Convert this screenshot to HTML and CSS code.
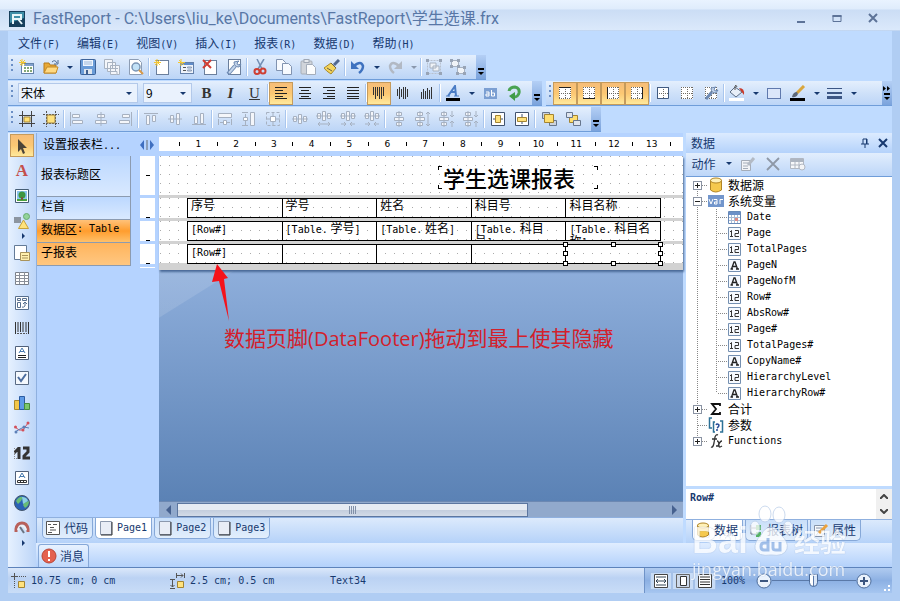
FILE: index.html
```
<!DOCTYPE html>
<html lang="zh-CN">
<head>
  <meta charset="UTF-8">
  <title>FastReport - 学生选课.frx</title>
  <link rel="stylesheet" href="styles.css">
</head>
<body>

  <!-- icon sprite -->
  <svg class="sprite" xmlns="http://www.w3.org/2000/svg">
    <symbol id="logo" viewBox="0 0 16 16"><rect width="16" height="16" fill="#163f5c"/><path d="M1 1h14v6L1 12z" fill="#3f8fa8"/><path d="M4 13V4h8v4H5M9 8l4 5" fill="none" stroke="#e8f6fa" stroke-width="2"/></symbol>
    <symbol id="new" viewBox="0 0 16 16"><rect x="2.500" y="4.500" width="12" height="10" fill="#fff" stroke="#6482ab"/><path d="M5 5h9v2H5z" fill="#7fa0cc"/><path d="M5 9h2M8 9h2M11 9h2M5 12h2M8 12h2M11 12h2" stroke="#85a977" stroke-width="2"/><path d="M3 0v7M0 3.500h7M1 1l5 5M6 1L1 6" stroke="#f3c632"/></symbol>
    <symbol id="open" viewBox="0 0 16 16"><path d="M1 14V4h5l1 2h6v8z" fill="#e8a936" stroke="#b67a1b"/><path d="M1 14l3-6h11l-2 6z" fill="#ffd982" stroke="#c48b29"/><path d="M9 3q3-3 5 1M15 1v4h-4" fill="none" stroke="#4d6a93"/></symbol>
    <symbol id="save" viewBox="0 0 16 16"><rect x=".5" y=".5" width="15" height="15" rx="1" fill="#6a9cd8" stroke="#3c6399"/><path d="M3 1h10v6H3z" fill="#eff6ff"/><path d="M4 3h8M4 5h8" stroke="#9cb8d9"/><path d="M4 10h8v5H4z" fill="#dde5ee"/><path d="M6 11h2v4H6z" fill="#3f5f8e"/></symbol>
    <symbol id="saveall" viewBox="0 0 16 16"><g fill="#f4f6fa" stroke="#a9b3c1"><path d="M.5.5h8v9h-8zM3.500 3.500h8v9h-8zM6.500 6.500h9v9h-9z"/><path d="M8 9.500h6M9 12.500h4v3"/></g></symbol>
    <symbol id="preview" viewBox="0 0 16 16"><path d="M1.500.5h9l3 3v12h-12z" fill="#fff" stroke="#8d9db4"/><circle cx="8" cy="8" r="4" fill="#c3e2f7" stroke="#7a95b5" stroke-width="1.500"/><path d="M11 11l4 4" stroke="#d99a48" stroke-width="2"/></symbol>
    <symbol id="page" viewBox="0 0 16 16"><rect x="2.500" y="1.500" width="12" height="14" fill="#fff" stroke="#6b7f9c"/><path d="M3 0v7M0 3.500h7M1 1l5 5M6 1L1 6" stroke="#f3c632"/></symbol>
    <symbol id="dialog" viewBox="0 0 16 16"><rect x="2.500" y="3.500" width="13" height="11" fill="#eef3fb" stroke="#6480aa"/><path d="M3 4h12v2H3z" fill="#5f8bc9"/><path d="M5 8.500h3M5 11.500h3" stroke="#555"/><path d="M9.500 8v1h4V8zM9.500 11v1h4v-1z" fill="none" stroke="#8a9bb5"/><path d="M3 0v7M0 3.500h7M1 1l5 5" stroke="#f3c632"/></symbol>
    <symbol id="delpage" viewBox="0 0 16 16"><rect x="2.500" y="1.500" width="12" height="14" fill="#fff" stroke="#6b7f9c"/><path d="M1 1l8 8M9 1L1 9" stroke="#d03c33" stroke-width="2"/></symbol>
    <symbol id="setup" viewBox="0 0 16 16"><rect x="2.500" y=".5" width="12" height="15" fill="#fff" stroke="#6b7f9c"/><path d="M2 15l7-8" stroke="#6d89b2" stroke-width="4"/><path d="M3 14l6-7" stroke="#c3d4ea" stroke-width="2"/><path d="M8 3q0 5 5 5l2-3-3 1-1-2 2-2z" fill="#c2d3e9" stroke="#6d89b2"/></symbol>
    <symbol id="cut" viewBox="0 0 16 16"><path d="M5 0l5 10M12 0L6 10" stroke="#748fb5" stroke-width="1.500"/><circle cx="5" cy="12.500" r="2.500" fill="none" stroke="#cf3f33" stroke-width="2"/><circle cx="11" cy="12" r="2.500" fill="none" stroke="#cf3f33" stroke-width="2"/></symbol>
    <symbol id="copy" viewBox="0 0 16 16"><g fill="#f7fafe" stroke="#8193b0"><path d="M.5.5h6l3 3v8h-9z"/><path d="M6.500 4.500h6l3 3v8h-9z"/></g></symbol>
    <symbol id="paste" viewBox="0 0 16 16"><rect x="1" y="2" width="11" height="13" rx="1" fill="#d0d4da" stroke="#a7aeb8"/><rect x="4" y=".5" width="5" height="3" fill="#e6e9ed" stroke="#a0a8b4"/><path d="M6.500 5.500h6l3 3v7h-9z" fill="#fbfcfd" stroke="#a4adba"/></symbol>
    <symbol id="brush" viewBox="0 0 16 16"><path d="M10 6l5-5" stroke="#51688f" stroke-width="3"/><path d="M7 4l5 5-5 6Q2 12 0 9z" fill="#f4d45c" stroke="#a98a2c"/><path d="M3 9l5 3M7 4l5 5" stroke="#6b6246"/></symbol>
    <symbol id="undo" viewBox="0 0 16 16"><path d="M4 7q7-6 9 0 0 4-4 7" fill="none" stroke="#3f72bf" stroke-width="2.500"/><path d="M1 2v8h8z" fill="#3f72bf"/></symbol>
    <symbol id="redo" viewBox="0 0 16 16"><path d="M12 7q-7-6-9 0 0 4 4 7" fill="none" stroke="#b2b9c4" stroke-width="2.500"/><path d="M15 2v8H7z" fill="#b2b9c4"/></symbol>
    <symbol id="group" viewBox="0 0 16 16"><path d="M1.500 1.500h13v13h-13z" fill="none" stroke="#b8c1ce" stroke-dasharray="2 1"/><path d="M4 4h6v5H4zM7 7h6v5H7z" fill="#f0f3f7" stroke="#a8b2c0"/><path d="M0 0h3v3H0zM13 0h3v3h-3zM0 13h3v3H0zM13 13h3v3h-3z" fill="#98a4b6"/></symbol>
    <symbol id="ungroup" viewBox="0 0 16 16"><path d="M1.500 1.500h7v6h-7zM7.500 8.500h7v6h-7z" fill="#f0f3f7" stroke="#a8b2c0"/><path d="M0 0h3v3H0zM7 0h3v3H7zM0 6h3v3H0zM7 6h3v3H7zM13 7h3v3h-3zM6 13h3v3H6zM13 13h3v3h-3z" fill="#98a4b6"/></symbol>
    <symbol id="al" viewBox="0 0 16 16"><path d="M2 2.500h12M2 5.500h8M2 8.500h12M2 11.500h8M2 13.500h12" stroke="#222"/></symbol>
    <symbol id="ac" viewBox="0 0 16 16"><path d="M2 2.500h12M4 5.500h8M2 8.500h12M4 11.500h8M2 13.500h12" stroke="#222"/></symbol>
    <symbol id="ar" viewBox="0 0 16 16"><path d="M2 2.500h12M6 5.500h8M2 8.500h12M6 11.500h8M2 13.500h12" stroke="#222"/></symbol>
    <symbol id="aj" viewBox="0 0 16 16"><path d="M2 2.500h12M2 5.500h12M2 8.500h12M2 11.500h12M2 13.500h12" stroke="#222"/></symbol>
    <symbol id="vt" viewBox="0 0 16 16"><path d="M2.500 2v8M4.500 2v12M6.500 2v9M8.500 2v12M10.500 2v12M12.500 2v9" stroke="#333"/></symbol>
    <symbol id="vc" viewBox="0 0 16 16"><path d="M2.500 4v7M4.500 2v12M6.500 4v8M8.500 2v12M10.500 2v12M12.500 4v8" stroke="#333"/></symbol>
    <symbol id="vb" viewBox="0 0 16 16"><path d="M2.500 7v7M4.500 4v10M6.500 6v8M8.500 3v11M10.500 5v9M12.500 2v12" stroke="#333"/></symbol>
    <symbol id="fcolor" viewBox="0 0 16 16"><path d="M1 13h14v3H1z" fill="#000"/><path d="M3 11l7-10 1 10M6 7h5" fill="none" stroke="#4a7cc4" stroke-width="2"/><path d="M1 11h4M9 11h5" stroke="#4a7cc4"/></symbol>
    <symbol id="ab" viewBox="0 0 16 16"><path d="M2 3h13v11H2z" fill="#7c9fd2"/><path d="M4 7h3v4H4V9h3M9.500 5v6h3V8h-3" fill="none" stroke="#fff"/></symbol>
    <symbol id="rot" viewBox="0 0 16 16"><path d="M3 6q1-4 6-4 5 1 4 6-1 4-5 4" fill="none" stroke="#4aa352" stroke-width="3"/><path d="M3 11l6-4v9z" fill="#3f9b47"/></symbol>
    <symbol id="grid" viewBox="0 0 16 16"><path d="M2 2h12v12H2z" fill="#fff"/><path d="M2.500 2v12M8.500 2v12M13.500 2v12M2 2.500h12M2 8.500h12M2 13.500h12" stroke="#6e6a63" stroke-dasharray="1 1"/></symbol>
    <symbol id="g-top" viewBox="0 0 16 16"><use href="#grid"/><path d="M2 2.500h12" stroke="#222"/></symbol>
    <symbol id="g-bot" viewBox="0 0 16 16"><use href="#grid"/><path d="M2 13.500h12" stroke="#222"/></symbol>
    <symbol id="g-left" viewBox="0 0 16 16"><use href="#grid"/><path d="M2.500 2v12" stroke="#222"/></symbol>
    <symbol id="g-right" viewBox="0 0 16 16"><use href="#grid"/><path d="M13.500 2v12" stroke="#222"/></symbol>
    <symbol id="g-all" viewBox="0 0 16 16"><use href="#grid"/><path d="M2.500 2.500h11v11h-11z" fill="none" stroke="#415b82"/></symbol>
    <symbol id="g-set" viewBox="0 0 16 16"><use href="#grid"/><path d="M3 14l6-7" stroke="#6d89b2" stroke-width="3"/><path d="M8 3q0 5 5 5l2-3-3 1-1-2 2-2z" fill="#c2d3e9" stroke="#6d89b2"/></symbol>
    <symbol id="fill" viewBox="0 0 16 16"><path d="M0 13h15v3H0z" fill="#fff"/><path d="M6 2l7 5-6 5-6-5z" fill="#e7eef8" stroke="#5c6c84"/><path d="M6 5V1q1-2 2 1" fill="none" stroke="#555"/><path d="M10 3q6 0 5 7l-3-4z" fill="#c93a2b"/></symbol>
    <symbol id="box" viewBox="0 0 16 16"><rect x="1.500" y="3.500" width="13" height="10" fill="#dbe6fa" stroke="#6079ad"/></symbol>
    <symbol id="lcolor" viewBox="0 0 16 16"><path d="M0 13h15v3H0z"/><path d="M7 8l7-7" stroke="#d9a63d" stroke-width="3"/><path d="M2 12q1-5 5-5l1 2q-2 4-6 3z" fill="#5d6878"/></symbol>
    <symbol id="lines" viewBox="0 0 16 16"><path d="M0 3.500h15" stroke="#3c5684"/><path d="M0 8h15" stroke="#3c5684" stroke-width="2"/><path d="M0 12.500h15" stroke="#3c5684" stroke-width="3"/></symbol>
    <symbol id="snap" viewBox="0 0 16 16"><path d="M0 4.500h16M0 12.500h16M3.500 0v16M12.500 0v16" stroke="#444"/><path d="M5 6h6v5H5z" fill="#ffdf72" stroke="#a88732"/></symbol>
    <symbol id="snap2" viewBox="0 0 16 16"><path d="M0 3.500h16M0 12.500h16M3.500 0v16M12.500 0v16" stroke="#555" stroke-dasharray="2 1"/><path d="M4 4h8v8H4z" fill="#ffe27d" stroke="#9d8345"/></symbol>
    <symbol id="a1" viewBox="0 0 16 16"><path d="M1.500 1v14M3.500 3.500h7v3h-7zM3.500 9.500h10v3h-10z" fill="#f4f6fa" stroke="#a6b1c1"/></symbol>
    <symbol id="a2" viewBox="0 0 16 16"><path d="M8 1v14M4.500 3.500h7v3h-7zM2.500 9.500h11v3h-11z" fill="#f4f6fa" stroke="#a6b1c1"/></symbol>
    <symbol id="a3" viewBox="0 0 16 16"><path d="M14.500 1v14M5.500 3.500h7v3h-7zM2.500 9.500h10v3h-10z" fill="#f4f6fa" stroke="#a6b1c1"/></symbol>
    <symbol id="a4" viewBox="0 0 16 16"><path d="M1 2.500h14M3.500 4.500h3v9h-3zM9.500 4.500h3v6h-3z" fill="#f4f6fa" stroke="#a6b1c1"/></symbol>
    <symbol id="a5" viewBox="0 0 16 16"><path d="M1 8h14M3.500 4.500h3v7h-3zM9.500 2.500h3v11h-3z" fill="#f4f6fa" stroke="#a6b1c1"/></symbol>
    <symbol id="a6" viewBox="0 0 16 16"><path d="M1 13.500h14M3.500 5.500h3v7h-3zM9.500 2.500h3v10h-3z" fill="#f4f6fa" stroke="#a6b1c1"/></symbol>
    <symbol id="b1" viewBox="0 0 16 16"><path d="M1.500 2.500h13v4h-13z" fill="#f4f6fa" stroke="#a6b1c1"/><path d="M1.500 8v6M14.500 8v6M3 11.500h3M10 11.500h3M6.500 9.500h3v4h-3z" fill="#fff" stroke="#a6b1c1"/></symbol>
    <symbol id="b2" viewBox="0 0 16 16"><path d="M9.500 1.500h4v13h-4z" fill="#f4f6fa" stroke="#a6b1c1"/><path d="M1 1.500h6M1 14.500h6M4.500 3v3M4.500 10v4M2.500 6.500h4v3h-4z" fill="#fff" stroke="#a6b1c1"/></symbol>
    <symbol id="b3" viewBox="0 0 16 16"><path d="M1.500 1.500h13v13h-13z" fill="none" stroke="#a6b1c1" stroke-dasharray="3 2"/><path d="M5.500 5.500h5v5h-5zM8 1v4M8 11v4M1 8h4M11 8h4" fill="#fff" stroke="#a6b1c1"/></symbol>
    <symbol id="h0" viewBox="0 0 16 16"><path d="M0 8h16M1.500 5.500h3v5h-3zM6.500 3.500h3v9h-3zM11.500 5.500h3v5h-3z" fill="#f4f6fa" stroke="#a6b1c1"/></symbol>
    <symbol id="h1" viewBox="0 0 16 16"><path d="M0 5h16M1.500 2.500h3v5h-3zM6.500.5h3v9h-3zM11.500 2.500h3v5h-3z" fill="#f4f6fa" stroke="#a6b1c1"/><path d="M2 13h12M4 11l-2 2 2 2M12 11l2 2-2 2" fill="none" stroke="#a6b1c1"/></symbol>
    <symbol id="h2" viewBox="0 0 16 16"><path d="M0 5h16M1.500 2.500h3v5h-3zM6.500.5h3v9h-3zM11.500 2.500h3v5h-3z" fill="#f4f6fa" stroke="#a6b1c1"/><path d="M1 13h5M10 13h5M4 11l2 2-2 2M12 11l-2 2 2 2" fill="none" stroke="#a6b1c1"/></symbol>
    <symbol id="v0" viewBox="0 0 16 16"><path d="M8 0v16M5.500 1.500h5v3h-5zM3.500 6.500h9v3h-9zM5.500 11.500h5v3h-5z" fill="#f4f6fa" stroke="#a6b1c1"/></symbol>
    <symbol id="v1" viewBox="0 0 16 16"><path d="M5 0v16M2.500 1.500h5v3h-5zM.5 6.500h9v3h-9zM2.500 11.500h5v3h-5z" fill="#f4f6fa" stroke="#a6b1c1"/><path d="M13 1v14M11 3l2-2 2 2M11 13l2 2 2-2" fill="none" stroke="#a6b1c1"/></symbol>
    <symbol id="v2" viewBox="0 0 16 16"><path d="M5 0v16M2.500 1.500h5v3h-5zM.5 6.500h9v3h-9zM2.500 11.500h5v3h-5z" fill="#f4f6fa" stroke="#a6b1c1"/><path d="M13 0v6M13 10v6M11 4l2 2 2-2M11 12l2-2 2 2" fill="none" stroke="#a6b1c1"/></symbol>
    <symbol id="c1" viewBox="0 0 16 16"><path d="M1.500 1.500h13v13h-13z" fill="#fff" stroke="#41536f"/><path d="M3 8h10" stroke="#41536f"/><path d="M5.500 4.500h5v7h-5z" fill="#ffe27d" stroke="#a38432"/></symbol>
    <symbol id="c2" viewBox="0 0 16 16"><path d="M1.500 1.500h13v13h-13z" fill="#fff" stroke="#41536f"/><path d="M8 3v10" stroke="#41536f"/><path d="M3.500 6.500h9v4h-9z" fill="#ffe27d" stroke="#a38432"/></symbol>
    <symbol id="front" viewBox="0 0 16 16"><path d="M1.500 1.500h7v6h-7zM8.500 9.500h7v5h-7z" fill="#ccd3de" stroke="#67768d"/><path d="M3.500 3.500h9v8h-9z" fill="#ffdf70" stroke="#a38432"/></symbol>
    <symbol id="back" viewBox="0 0 16 16"><path d="M4.500 4.500h8v7h-8z" fill="#ffdf70" stroke="#a38432"/><path d="M1.500 1.500h6v5h-6zM8.500 9.500h7v5h-7z" fill="#dfe5ee" stroke="#67768d"/></symbol>
    <symbol id="arrow" viewBox="0 0 16 16"><path d="M4 1l9 9H9l2 5-2 1-2-5-3 3z" fill="#4d4438"/></symbol>
    <symbol id="pic" viewBox="0 0 16 16"><path d="M1.500 1.500h13v13h-13z" fill="#fff" stroke="#445d74"/><path d="M3 3h10v10H3z" fill="#8bc4ee"/><circle cx="8" cy="7" r="3.500" fill="#3f963f"/><path d="M3 11h10v2H3z" fill="#4aa23e"/><path d="M7 9h2v3H7z" fill="#7b5936"/></symbol>
    <symbol id="shapes" viewBox="0 0 16 16"><path d="M0 4h7v6H0z" fill="#8c95a0"/><circle cx="12.500" cy="3.500" r="3" fill="#93d39a" stroke="#67ab70"/><path d="M9.500 7l5 8.500h-10z" fill="#ffe27b" stroke="#c6a23b"/></symbol>
    <symbol id="sub" viewBox="0 0 16 16"><path d="M.5.5h12v14H.5z" fill="#fff" stroke="#637a97"/><path d="M6.500 7.500h9v8h-9z" fill="#fff0ae" stroke="#a9935a"/><path d="M8 10.500h6M8 13h6" stroke="#a9935a"/></symbol>
    <symbol id="table" viewBox="0 0 16 16"><path d="M1.500 2.500h13v12h-13z" fill="#fff" stroke="#7a808a"/><path d="M1 5.500h14M1 8.500h14M1 11.500h14M5.500 2v12M10.500 2v12" stroke="#8a8f98"/></symbol>
    <symbol id="matrix" viewBox="0 0 16 16"><path d="M1.500 1.500h13v13h-13z" fill="#fff" stroke="#58708f"/><path d="M3.500 3.500h3v2h-3zM8.500 3.500h4v2h-4zM3.500 7.500h3v5h-3zM11 8v3q-2 2-3 1M9 9l2-2 2 2" fill="none" stroke="#58708f"/></symbol>
    <symbol id="bars" viewBox="0 0 16 16"><path d="M1.500 2v12M4 2v10M6.500 2v10M9 2v10M12 2v10M14.500 2v12" stroke="#333"/><path d="M3 13.500h10" stroke="#555" stroke-dasharray="2 1"/></symbol>
    <symbol id="rich" viewBox="0 0 16 16"><path d="M1.500 1.500h13v13h-13z" fill="#fff" stroke="#50617a"/><path d="M5 8l3-5 3 5M6 6.500h4" fill="none" stroke="#477ab0"/><path d="M4 10.500h8M4 12.500h8" stroke="#222"/></symbol>
    <symbol id="check" viewBox="0 0 16 16"><path d="M1.500 1.500h13v13h-13z" fill="#f4f8fd" stroke="#596b84"/><path d="M4 7l3 4 5-7" fill="none" stroke="#4b6c9e" stroke-width="2"/></symbol>
    <symbol id="chart" viewBox="0 0 16 16"><path d="M.5 5.500h5v9h-5z" fill="#f3c74a" stroke="#a8882f"/><path d="M5.500 1.500h5v13h-5z" fill="#5f9be6" stroke="#2c5ca2"/><path d="M10.500 8.500h5v6h-5z" fill="#7bc76a" stroke="#478a3c"/></symbol>
    <symbol id="spark" viewBox="0 0 16 16"><path d="M1 7l4 3 4 0 5-7" fill="none" stroke="#d2505a"/><path d="M1 12l5-3 4-2 5 1" fill="none" stroke="#5d80b8"/><g fill="#d2505a"><circle cx="1.500" cy="7" r="1.500"/><circle cx="9" cy="10" r="1.500"/><circle cx="14" cy="3" r="1.500"/></g><g fill="#5d80b8"><circle cx="2" cy="12" r="1.500"/><circle cx="10" cy="7" r="1.500"/></g></symbol>
    <symbol id="zip" viewBox="0 0 16 16"><path d="M5 2v12M0 8l5-5M9 3h5v4l-4 4v2h6" fill="none" stroke="#333" stroke-width="3"/><path d="M.5 14V2M0 13.500h4" stroke="#888" stroke-dasharray="1 1"/></symbol>
    <symbol id="cell" viewBox="0 0 16 16"><path d="M1.500 1.500h13v13h-13z" fill="#fff" stroke="#50617a"/><path d="M5 8l3-5 3 5M6 6.500h4" fill="none" stroke="#477ab0"/><path d="M3.500 10.500h9v2h-9zM6.500 10v3M9.500 10v3" fill="none" stroke="#333"/></symbol>
    <symbol id="globe" viewBox="0 0 16 16"><circle cx="8" cy="8" r="7.500" fill="#2b62b5" stroke="#43566c"/><path d="M2 6q3-5 7-4l-2 4-3 3zM10 8l5-2q0 5-4 7l-2-3z" fill="#68bd75"/><path d="M8 2q5 0 6 4l-5 3z" fill="#8dd2e3"/></symbol>
    <symbol id="gauge" viewBox="0 0 16 16"><path d="M2 12V9q1-6 6-6t6 6v3" fill="none" stroke="#b8605a" stroke-width="3"/><path d="M4 10q1-4 4-4t4 4" fill="none" stroke="#eef1f5" stroke-width="2"/><path d="M6 7l4 6" stroke="#6a7484" stroke-width="2"/></symbol>
    <symbol id="code" viewBox="0 0 16 16"><path d="M1.500 1.500h13v13h-13z" fill="#fff" stroke="#555"/><path d="M3 4.500h3M8 4.500h4M5 7.500h4M5 10h6M3 12.500h4" stroke="#555"/></symbol>
    <symbol id="leaf" viewBox="0 0 16 16"><path d="M2.500 1.500h11v13h-11z" fill="#e9edf6" stroke="#8c98ad"/><path d="M14 2v13H3" fill="none" stroke="#333"/></symbol>
    <symbol id="alert" viewBox="0 0 16 16"><circle cx="8" cy="8" r="7" fill="#e4614f" stroke="#b94435"/><path d="M8 3v6M8 11v2" stroke="#fff" stroke-width="2"/></symbol>
    <symbol id="db" viewBox="0 0 16 16"><path d="M2.500 3v10q5 4 11 0V3z" fill="#f5c94e" stroke="#b18525"/><ellipse cx="8" cy="3.500" rx="5.500" ry="2.500" fill="#fff1b8" stroke="#b18525"/></symbol>
    <symbol id="var" viewBox="0 0 16 12"><path d="M0 0h16v12H0z" fill="#7296cc"/><path d="M1 4l2 5 2-5M6 4.500h3V9H6.500V7H9M12 9V4.500h3" fill="none" stroke="#fff"/></symbol>
    <symbol id="date" viewBox="0 0 13 13"><path d="M.5.5h12v12H.5z" fill="#fff" stroke="#6789b8"/><path d="M1 1h11v3H1z" fill="#6c90c7"/><path d="M1 6.500h11M1 9.500h11M3.500 4v8M6.500 4v8M9.500 4v8" stroke="#a9bbd4"/><path d="M7 7h3v3H7z" fill="#e08b84"/></symbol>
    <symbol id="num" viewBox="0 0 13 13"><path d="M.5.5h12v12H.5z" fill="#f6faff" stroke="#7590b1"/><path d="M2 5l1.500-1.500V9M2 9.500h3M7 3.500h3.500v3H7v3h4" fill="none" stroke="#333"/></symbol>
    <symbol id="str" viewBox="0 0 13 13"><path d="M.5.5h12v12H.5z" fill="#f6faff" stroke="#7590b1"/><path d="M3.500 10L6 3h1l2.500 7M4.500 7.500h4M2.500 10h2.500M8 10h3" fill="none" stroke="#222" stroke-width="1.300"/></symbol>
    <symbol id="sigma" viewBox="0 0 16 16"><path d="M12 5V3H4l4 5-4 5h8v-2" fill="none" stroke="#111" stroke-width="1.800"/></symbol>
    <symbol id="param" viewBox="0 0 16 16"><path d="M4 1H1.500v10H4M7 5H5.500v10H7M12 4h2.500v11H12" fill="none" stroke="#2c7196" stroke-width="1.500"/><path d="M8 8q1-2 3 0 0 2-2 3M9 12v2" fill="none" stroke="#254a96" stroke-width="1.500"/></symbol>
    <symbol id="fx" viewBox="0 0 16 16"><path d="M3 14q2 1 3-4l1-6q1-3 3-2M4 6h5M9 8q2 0 2 5 0 2 3 0M14 8q-2 0-4 5H8" fill="none" stroke="#333" stroke-width="1.300"/></symbol>
    <symbol id="pos" viewBox="0 0 16 16"><path d="M0 3.500h7M3.500 0v7" stroke="#555"/><path d="M8 3.500h7M3.500 8v8" stroke="#555" stroke-dasharray="1 1"/><path d="M7.500 8.500h6v6h-6z" fill="#ffe27d" stroke="#a38432"/></symbol>
    <symbol id="size" viewBox="0 0 16 16"><path d="M6.500 0v5M14.500 0v5M7 2.500h6M11 .5l2 2-2 2M0 6.500h5M0 15.500h5M2.500 7v7M.5 12l2 2 2-2" fill="none" stroke="#555"/><path d="M7.500 8.500h6v6h-6z" fill="#ffe27d" stroke="#a38432"/></symbol>
    <symbol id="edit" viewBox="0 0 16 16"><path d="M1.500 4.500h9v10h-9z" fill="#f2f4f7" stroke="#a4acb8"/><path d="M3 7h5M3 10h5M3 12.500h5" stroke="#a4acb8"/><path d="M8 9l6-7" stroke="#b3bac4" stroke-width="3"/></symbol>
    <symbol id="cross" viewBox="0 0 16 16"><path d="M2 2l12 12M14 2L2 14" stroke="#8e98a7" stroke-width="1.800"/></symbol>
    <symbol id="view" viewBox="0 0 16 16"><path d="M.5 2.500h13v10H.5z" fill="#f7f8fa" stroke="#b0b7c2"/><path d="M1 3h13v3H1z" fill="#adb5c1"/><path d="M1 9h13M5 6v6M9 6v6" stroke="#b0b7c2"/><circle cx="12" cy="11" r="3" fill="#f3f4f6" stroke="#b0b7c2"/></symbol>
    <symbol id="tree" viewBox="0 0 16 16"><path d="M3 3v9h6M3 6h5" fill="none" stroke="#667"/><path d="M8 3h5v5H8zM8 10h5v5H8z" fill="#55b162"/></symbol>
    <symbol id="prop" viewBox="0 0 16 16"><path d="M1.500 3.500h10v11h-10z" fill="#f7f9fc" stroke="#8594aa"/><path d="M3 6h6M3 9h6" stroke="#8594aa"/><path d="M6 11l8-8" stroke="#eba23e" stroke-width="3"/></symbol>
    <symbol id="fitw" viewBox="0 0 16 16"><path d="M1.500 1.500h13v13h-13z" fill="#fff" stroke="#444"/><path d="M3 4h10M3 12h10M3 8h10M5 6L3 8l2 2M11 6l2 2-2 2" fill="none" stroke="#345"/></symbol>
    <symbol id="fitp" viewBox="0 0 16 16"><path d="M1.500 1.500h13v13h-13z" fill="#cdd9ea" stroke="#666"/><path d="M5.500 3.500h6v9h-6z" fill="#fff" stroke="#333"/></symbol>
    <symbol id="full" viewBox="0 0 16 16"><path d="M1.500 1.500h13v13h-13z" fill="#fff" stroke="#444"/><path d="M3 4h10M3 6.500h10M3 9h10M3 11.500h10" stroke="#333"/></symbol>
  </svg>

  <header class="titlebar">
    <svg class="icon"><use href="#logo"/></svg>
    <h1>FastReport - C:\Users\liu_ke\Documents\FastReport\学生选课.frx</h1>
    <div class="win-buttons">
      <button aria-label="最小化"><svg viewBox="0 0 12 12"><path d="M2 10h8" stroke="#5d7398" stroke-width="2"/></svg></button>
      <button aria-label="最大化"><svg viewBox="0 0 12 12"><path d="M2 3.500h8v6H2z" fill="none" stroke="#5d7398"/><path d="M1.500 4h9" stroke="#5d7398" stroke-width="2"/></svg></button>
      <button aria-label="关闭"><svg viewBox="0 0 12 12"><path d="M2 2l8 8M10 2l-8 8" stroke="#5d7398" stroke-width="2"/></svg></button>
    </div>
  </header>

  <div class="frame">
    <nav class="menu">
      <a href="#">文件<span class="en">(F)</span></a>
      <a href="#">编辑<span class="en">(E)</span></a>
      <a href="#">视图<span class="en">(V)</span></a>
      <a href="#">插入<span class="en">(I)</span></a>
      <a href="#">报表<span class="en">(R)</span></a>
      <a href="#">数据<span class="en">(D)</span></a>
      <a href="#">帮助<span class="en">(H)</span></a>
    </nav>

    <div class="bar-row">
      <div class="toolbar">
        <button aria-label="新建"><svg class="icon"><use href="#new"/></svg></button>
        <button aria-label="打开"><svg class="icon"><use href="#open"/></svg></button>
        <button class="drop" aria-label="最近"></button>
        <button aria-label="保存"><svg class="icon"><use href="#save"/></svg></button>
        <button aria-label="全部保存"><svg class="icon"><use href="#saveall"/></svg></button>
        <button aria-label="预览"><svg class="icon"><use href="#preview"/></svg></button>
        <i class="sep"></i>
        <button aria-label="新页"><svg class="icon"><use href="#page"/></svg></button>
        <button aria-label="新对话框"><svg class="icon"><use href="#dialog"/></svg></button>
        <button aria-label="删除页"><svg class="icon"><use href="#delpage"/></svg></button>
        <button aria-label="页面设置"><svg class="icon"><use href="#setup"/></svg></button>
        <i class="sep"></i>
        <button aria-label="剪切"><svg class="icon"><use href="#cut"/></svg></button>
        <button aria-label="复制"><svg class="icon"><use href="#copy"/></svg></button>
        <button aria-label="粘贴"><svg class="icon"><use href="#paste"/></svg></button>
        <button aria-label="格式刷"><svg class="icon"><use href="#brush"/></svg></button>
        <i class="sep"></i>
        <button aria-label="撤消"><svg class="icon"><use href="#undo"/></svg></button>
        <button class="drop" aria-label="撤消列表"></button>
        <button aria-label="重做"><svg class="icon"><use href="#redo"/></svg></button>
        <button class="drop off" aria-label="重做列表"></button>
        <i class="sep"></i>
        <button aria-label="组合"><svg class="icon"><use href="#group"/></svg></button>
        <button aria-label="取消组合"><svg class="icon"><use href="#ungroup"/></svg></button>
        <button class="cap" aria-label="更多"></button>
      </div>
    </div>

    <div class="bar-row">
      <div class="toolbar">
        <label class="pick font-name"><select aria-label="字体"><option>宋体</option></select></label>
        <label class="pick font-size"><select aria-label="字号"><option>9</option></select></label>
        <button class="letter b">B</button>
        <button class="letter i">I</button>
        <button class="letter u">U</button>
        <i class="sep"></i>
        <button class="on" aria-label="左对齐"><svg class="icon"><use href="#al"/></svg></button>
        <button aria-label="居中"><svg class="icon"><use href="#ac"/></svg></button>
        <button aria-label="右对齐"><svg class="icon"><use href="#ar"/></svg></button>
        <button aria-label="两端对齐"><svg class="icon"><use href="#aj"/></svg></button>
        <i class="sep"></i>
        <button class="on" aria-label="顶端"><svg class="icon"><use href="#vt"/></svg></button>
        <button aria-label="中部"><svg class="icon"><use href="#vc"/></svg></button>
        <button aria-label="底端"><svg class="icon"><use href="#vb"/></svg></button>
        <i class="sep"></i>
        <button aria-label="文字颜色"><svg class="icon"><use href="#fcolor"/></svg></button>
        <button class="drop" aria-label="选择文字颜色"></button>
        <button aria-label="高亮"><svg class="icon"><use href="#ab"/></svg></button>
        <button aria-label="旋转"><svg class="icon"><use href="#rot"/></svg></button>
        <button class="cap" aria-label="更多"></button>
      </div>
      <div class="toolbar wide">
        <button class="on" aria-label="上边框"><svg class="icon"><use href="#g-top"/></svg></button>
        <button class="on" aria-label="下边框"><svg class="icon"><use href="#g-bot"/></svg></button>
        <button class="on" aria-label="左边框"><svg class="icon"><use href="#g-left"/></svg></button>
        <button class="on" aria-label="右边框"><svg class="icon"><use href="#g-right"/></svg></button>
        <i class="sep"></i>
        <button aria-label="全部边框"><svg class="icon"><use href="#g-all"/></svg></button>
        <button aria-label="无边框"><svg class="icon"><use href="#grid"/></svg></button>
        <button aria-label="编辑边框"><svg class="icon"><use href="#g-set"/></svg></button>
        <i class="sep"></i>
        <button aria-label="填充"><svg class="icon"><use href="#fill"/></svg></button>
        <button class="drop" aria-label="填充颜色"></button>
        <button aria-label="填充样式"><svg class="icon"><use href="#box"/></svg></button>
        <button aria-label="线条"><svg class="icon"><use href="#lcolor"/></svg></button>
        <button class="drop" aria-label="线条颜色"></button>
        <button aria-label="线宽"><svg class="icon"><use href="#lines"/></svg></button>
        <button class="drop" aria-label="选择线宽"></button>
        <button class="cap more" aria-label="更多"><svg viewBox="0 0 8 5"><path d="M0 0l3 2.500L0 5zM4 0l3 2.500L4 5z"/></svg></button>
      </div>
    </div>

    <div class="bar-row">
      <div class="toolbar">
        <button aria-label="对齐网格"><svg class="icon"><use href="#snap"/></svg></button>
        <button aria-label="适应网格"><svg class="icon"><use href="#snap2"/></svg></button>
        <i class="sep"></i>
        <button disabled><svg class="icon"><use href="#a1"/></svg></button>
        <button disabled><svg class="icon"><use href="#a2"/></svg></button>
        <button disabled><svg class="icon"><use href="#a3"/></svg></button>
        <i class="sep"></i>
        <button disabled><svg class="icon"><use href="#a4"/></svg></button>
        <button disabled><svg class="icon"><use href="#a5"/></svg></button>
        <button disabled><svg class="icon"><use href="#a6"/></svg></button>
        <i class="sep"></i>
        <button disabled><svg class="icon"><use href="#b1"/></svg></button>
        <button disabled><svg class="icon"><use href="#b2"/></svg></button>
        <button disabled><svg class="icon"><use href="#b3"/></svg></button>
        <i class="sep gap"></i>
        <button disabled><svg class="icon"><use href="#h0"/></svg></button>
        <button disabled><svg class="icon"><use href="#h1"/></svg></button>
        <button disabled><svg class="icon"><use href="#h2"/></svg></button>
        <button disabled><svg class="icon"><use href="#h2"/></svg></button>
        <i class="sep gap"></i>
        <button disabled><svg class="icon"><use href="#v0"/></svg></button>
        <button disabled><svg class="icon"><use href="#v1"/></svg></button>
        <button disabled><svg class="icon"><use href="#v2"/></svg></button>
        <button disabled><svg class="icon"><use href="#v2"/></svg></button>
        <i class="sep gap"></i>
        <button aria-label="水平居中"><svg class="icon"><use href="#c1"/></svg></button>
        <button aria-label="垂直居中"><svg class="icon"><use href="#c2"/></svg></button>
        <i class="sep gap"></i>
        <button aria-label="置于顶层"><svg class="icon"><use href="#front"/></svg></button>
        <button aria-label="置于底层"><svg class="icon"><use href="#back"/></svg></button>
        <button class="cap" aria-label="更多"></button>
      </div>
    </div>

    <div class="main">
      <div class="objects">
        <button class="on" aria-label="选择"><svg class="icon"><use href="#arrow"/></svg></button>
        <button class="text-tool">A</button>
        <button aria-label="图片"><svg class="icon"><use href="#pic"/></svg></button>
        <button class="fly" aria-label="形状"><svg class="icon"><use href="#shapes"/></svg></button>
        <button aria-label="子报表"><svg class="icon"><use href="#sub"/></svg></button>
        <button aria-label="表格"><svg class="icon"><use href="#table"/></svg></button>
        <button aria-label="矩阵"><svg class="icon"><use href="#matrix"/></svg></button>
        <button aria-label="条码"><svg class="icon"><use href="#bars"/></svg></button>
        <button aria-label="富文本"><svg class="icon"><use href="#rich"/></svg></button>
        <button aria-label="复选框"><svg class="icon"><use href="#check"/></svg></button>
        <button aria-label="图表"><svg class="icon"><use href="#chart"/></svg></button>
        <button aria-label="迷你图"><svg class="icon"><use href="#spark"/></svg></button>
        <button aria-label="邮编"><svg class="icon"><use href="#zip"/></svg></button>
        <button aria-label="单元文本"><svg class="icon"><use href="#cell"/></svg></button>
        <button aria-label="地图"><svg class="icon"><use href="#globe"/></svg></button>
        <button class="fly" aria-label="仪表"><svg class="icon"><use href="#gauge"/></svg></button>
      </div>

      <div class="work">
        <div class="work-top">
          <section class="designer">
            <div class="design-area">
              <div class="bands">
                <div class="bands-head">设置报表栏<span class="en">...</span></div>
                <div class="band-item tall">报表标题区</div>
                <div class="band-item">栏首</div>
                <div class="band-item hot">数据区<span class="en">: Table</span></div>
                <div class="band-item hot sub">子报表</div>
              </div>
              <div class="vruler">
                <svg class="split" viewBox="0 0 14 10"><path d="M4 0v10L0 5zM10 0v10l4-5z" fill="#3f6fc0"/><path d="M7 0v10" stroke="#8d9fb8" stroke-width="2"/></svg>
                <i class="tall"></i><i></i><i></i><i></i><i class="thin"></i>
              </div>
              <div class="canvas">
                <div class="ruler">
                  <i></i><b>1</b><i></i><b>2</b><i></i><b>3</b><i></i><b>4</b><i></i><b>5</b><i></i><b>6</b><i></i><b>7</b><i></i><b>8</b><i></i><b>9</b><i></i><b>10</b><i></i><b>11</b><i></i><b>12</b><i></i><b>13</b><i></i>
                </div>
                <div class="paper">
                  <div class="band title-band"><h2>学生选课报表</h2></div>
                  <div class="band">
                    <table><tr><td>序号</td><td>学号</td><td>姓名</td><td>科目号</td><td>科目名称</td></tr></table>
                  </div>
                  <div class="band">
                    <table><tr>
                      <td><div><span class="en">[Row#]</span></div></td>
                      <td><div><span class="en">[Table.</span> 学号<span class="en">]</span></div></td>
                      <td><div><span class="en">[Table.</span> 姓名<span class="en">]</span></div></td>
                      <td><div><span class="en">[Table.</span> 科目<br>号<span class="en">]</span></div></td>
                      <td><div><span class="en">[Table.</span> 科目名<br>称<span class="en">]</span></div></td>
                    </tr></table>
                  </div>
                  <div class="band last">
                    <table><tr>
                      <td><div><span class="en">[Row#]</span></div></td><td></td><td></td><td></td>
                      <td class="selected"><i class="tl"></i><i class="tc"></i><i class="tr"></i><i class="ml"></i><i class="mr"></i><i class="bl"></i><i class="bc"></i><i class="br"></i></td>
                    </tr></table>
                  </div>
                </div>
                <div class="desk">
                  <div class="note">
                    <svg viewBox="0 0 20 60"><path d="M6 0l11 14-4 1 5 42L8 17l-7 1z" fill="#f5121a"/></svg>
                    <p>数据页脚<span>(DataFooter)</span>拖动到最上使其隐藏</p>
                  </div>
                </div>
                <div class="hscroll">
                  <button class="left" aria-label="向左"></button>
                  <div class="thumb"></div>
                  <button class="right" aria-label="向右"></button>
                </div>
              </div>
            </div>
            <div class="tabs">
              <button class="tab"><svg class="icon"><use href="#code"/></svg>代码</button>
              <button class="tab active"><svg class="icon"><use href="#leaf"/></svg><span class="en">Page1</span></button>
              <button class="tab"><svg class="icon"><use href="#leaf"/></svg><span class="en">Page2</span></button>
              <button class="tab"><svg class="icon"><use href="#leaf"/></svg><span class="en">Page3</span></button>
            </div>
          </section>

          <aside class="data">
            <div class="data-head">
              <h3>数据</h3>
              <button aria-label="固定"><svg viewBox="0 0 10 10"><path d="M3 1v5M7 1v5M3 1h4M1 6h8M5 6v4" fill="none" stroke="#17396f"/><path d="M6 1h1v5H6z" fill="#17396f"/></svg></button>
              <button aria-label="关闭"><svg viewBox="0 0 10 10"><path d="M1 1l8 8M9 1L1 9" stroke="#17396f" stroke-width="2"/></svg></button>
            </div>
            <div class="data-tools">
              <button class="action">动作</button>
              <button class="drop" aria-label="动作列表"></button>
              <button disabled><svg class="icon"><use href="#edit"/></svg></button>
              <button disabled><svg class="icon"><use href="#cross"/></svg></button>
              <button disabled><svg class="icon"><use href="#view"/></svg></button>
            </div>
            <ul class="tree">
              <li class="node"><i class="box plus"></i><svg class="icon"><use href="#db"/></svg>数据源</li>
              <li class="node"><i class="box"></i><svg class="icon"><use href="#var"/></svg>系统变量</li>
              <li>
                <ul class="en">
                  <li><svg><use href="#date"/></svg>Date</li>
                  <li><svg><use href="#num"/></svg>Page</li>
                  <li><svg><use href="#num"/></svg>TotalPages</li>
                  <li><svg><use href="#str"/></svg>PageN</li>
                  <li><svg><use href="#str"/></svg>PageNofM</li>
                  <li><svg><use href="#num"/></svg>Row#</li>
                  <li><svg><use href="#num"/></svg>AbsRow#</li>
                  <li><svg><use href="#num"/></svg>Page#</li>
                  <li><svg><use href="#num"/></svg>TotalPages#</li>
                  <li><svg><use href="#str"/></svg>CopyName#</li>
                  <li><svg><use href="#num"/></svg>HierarchyLevel</li>
                  <li><svg><use href="#str"/></svg>HierarchyRow#</li>
                </ul>
              </li>
              <li class="node"><i class="box plus"></i><svg class="icon"><use href="#sigma"/></svg>合计</li>
              <li class="node"><i class="none"></i><svg class="icon"><use href="#param"/></svg>参数</li>
              <li class="node"><i class="box plus"></i><svg class="icon"><use href="#fx"/></svg><span class="en">Functions</span></li>
            </ul>
            <div class="desc">
              <strong class="en">Row#</strong>
              <div class="spin">
                <svg viewBox="0 0 8 5"><path d="M0 5l4-4 4 4" fill="none" stroke="#444" stroke-width="2"/></svg>
                <svg viewBox="0 0 8 5"><path d="M0 0l4 4 4-4" fill="none" stroke="#444" stroke-width="2"/></svg>
              </div>
            </div>
            <div class="tabs">
              <button class="tab active"><svg class="icon"><use href="#db"/></svg>数据</button>
              <button class="tab"><svg class="icon"><use href="#tree"/></svg>报表树</button>
              <button class="tab"><svg class="icon"><use href="#prop"/></svg>属性</button>
            </div>
          </aside>
        </div>

        <div class="messages">
          <button><svg class="icon"><use href="#alert"/></svg>消息</button>
        </div>
      </div>
    </div>

    <footer class="status">
      <span class="cell pos"><svg class="icon"><use href="#pos"/></svg><span class="en">10.75 cm; 0 cm</span></span>
      <span class="cell size"><svg class="icon"><use href="#size"/></svg><span class="en">2.5 cm; 0.5 cm</span></span>
      <span class="cell en">Text34</span>
      <div class="zoom">
        <div class="views">
          <button aria-label="页宽"><svg class="icon"><use href="#fitw"/></svg></button>
          <button aria-label="整页"><svg class="icon"><use href="#fitp"/></svg></button>
          <button aria-label="实际大小"><svg class="icon"><use href="#full"/></svg></button>
        </div>
        <label class="en" for="zoom">100%</label>
        <button class="round" aria-label="缩小"><svg viewBox="0 0 16 16"><circle cx="8" cy="8" r="7" fill="#eaf2fc" stroke="#4d6d9c"/><path d="M4 8h8" stroke="#3c5680" stroke-width="2"/></svg></button>
        <input type="range" id="zoom" min="0" max="200" value="98">
        <button class="round" aria-label="放大"><svg viewBox="0 0 16 16"><circle cx="8" cy="8" r="7" fill="#eaf2fc" stroke="#4d6d9c"/><path d="M4 8h8M8 4v8" stroke="#3c5680" stroke-width="2"/></svg></button>
        <i class="grip"></i>
      </div>
    </footer>
  </div>

  <div class="watermark">
    <div class="wm-top">
      <span>Bai</span>
      <svg viewBox="0 0 46 54"><g fill="#fff" stroke="#b9cde8"><ellipse cx="7" cy="23" rx="5" ry="7"/><ellipse cx="17" cy="9" rx="6" ry="8"/><ellipse cx="31" cy="10" rx="6" ry="8"/><ellipse cx="40" cy="23" rx="5" ry="7"/><path d="M23 22q6 0 10 8 8 7 6 14-3 8-16 6-13 2-16-6-1-7 6-14 4-8 10-8z"/></g><path d="M20 33v12h-4q-3 0-3-3.500t3-3.500h4M25 37v6q0 2 3 2h4v-8" fill="none" stroke="#8fb2e2" stroke-width="3"/></svg>
      <span class="cn">经验</span>
    </div>
    <p>jingyan.baidu.com</p>
  </div>

</body>
</html>
```
FILE: styles.css
```
* {
  box-sizing: border-box;
}

body {
  margin: 0;
  height: 100vh;
  display: flex;
  flex-direction: column;
  overflow: hidden;
  background: #b0cdf3;
  font-family: "Noto Sans CJK SC", sans-serif;
  font-size: 12px;
  line-height: 16px;
  color: #17396f;
}

button {
  font: inherit;
  color: inherit;
  padding: 0;
  border: 0;
  background: none;
}

h1, h2, h3, p, ul {
  margin: 0;
  padding: 0;
  font-weight: normal;
}

.sprite {
  position: absolute;
  width: 0;
  height: 0;
}

.icon {
  width: 16px;
  height: 16px;
  flex: none;
}

.en {
  font-family: "DejaVu Sans Mono", monospace;
  font-size: 10px;
  line-height: 1;
}

/* title bar */
.titlebar {
  display: flex;
  align-items: center;
  flex: none;
  height: 31px;
  padding: 6px 15px 0 9px;
  background: linear-gradient(#e9f3ff 0, #dfecfc 9px, #cbddf5 10px, #dbe9fb 30px, #a9c4e8 31px);
}

.titlebar h1 {
  flex: 1;
  margin-left: 8px;
  font-family: Roboto, "Noto Sans CJK SC", sans-serif;
  font-size: 16px;
  line-height: 22px;
  color: #5877a6;
  white-space: nowrap;
}

.win-buttons {
  display: flex;
  gap: 12px;
}

.win-buttons button {
  width: 24px;
  height: 16px;
}

.win-buttons svg {
  width: 12px;
  height: 12px;
}

.frame {
  flex: 1;
  display: flex;
  flex-direction: column;
  min-height: 0;
  margin: 0 8px 8px;
  background: #bfdbff;
}

.menu {
  display: flex;
  gap: 17px;
  padding: 4px 10px;
  height: 24px;
}

.menu a {
  color: #17396f;
  text-decoration: none;
}

/* toolbars */
.bar-row {
  display: flex;
  gap: 4px;
  margin-bottom: 1px;
}

.toolbar {
  display: flex;
  align-items: center;
  height: 25px;
  padding-left: 7px;
  border-bottom: 1px solid #6f9dd9;
  background:
    radial-gradient(circle at 1px 1px, #6b8fc6 1px, transparent 1px) 3px 4px / 2px 4px no-repeat,
    radial-gradient(circle at 1px 1px, #6b8fc6 1px, transparent 1px) 3px 9px / 2px 4px no-repeat,
    radial-gradient(circle at 1px 1px, #6b8fc6 1px, transparent 1px) 3px 14px / 2px 4px no-repeat,
    linear-gradient(#e4effd, #cfe1f9 50%, #bcd5f7);
}

.toolbar.wide {
  flex: 1;
}

.toolbar button,
.objects button {
  display: flex;
  align-items: center;
  justify-content: center;
  width: 24px;
  height: 23px;
}

.toolbar .on,
.objects .on {
  border: 1px solid #c59b5c;
  background: linear-gradient(#f6bd78, #fcc873 50%, #ffe99c);
}

.toolbar .drop,
.data-tools .drop {
  width: 13px;
}

.drop::before {
  content: "";
  width: 0;
  border: 3px solid transparent;
  border-top-color: #17396f;
  border-bottom: 0;
}

.drop.off::before {
  border-top-color: #8a98ad;
}

.sep {
  width: 2px;
  height: 18px;
  background: #fff;
  border-left: 1px solid #a9c6ee;
}

.sep.gap {
  margin-right: 1px;
}

.toolbar .cap {
  width: 10px;
  height: 24px;
  margin-left: 6px;
  padding-top: 8px;
  flex-direction: column;
  gap: 2px;
  background: linear-gradient(#b4cff5, #7ba3dc);
}

.wide .cap {
  margin-left: auto;
}

.toolbar .more {
  padding-top: 0;
}

.more svg {
  width: 8px;
  height: 5px;
}

.cap::before {
  content: "";
  width: 6px;
  height: 2px;
  background: #000;
}

.more::before {
  order: 1;
}

.cap::after {
  content: "";
  order: 2;
  border: 3px solid transparent;
  border-top-color: #000;
  border-bottom: 0;
}

.pick {
  display: flex;
  align-items: center;
  margin: 0 2px 0 3px;
}

.pick select {
  appearance: none;
  width: 100%;
  height: 20px;
  padding: 0 2px 2px;
  border: 1px solid #b3c9ea;
  border-radius: 0;
  background: #eaf2fd;
  font-family: inherit;
  font-size: 12px;
  color: #000;
}

.pick::after {
  content: "";
  flex: none;
  margin-left: -12px;
  margin-right: 6px;
  border: 3px solid transparent;
  border-top-color: #17396f;
  border-bottom: 0;
}

.font-name {
  width: 120px;
}

.font-size {
  width: 49px;
  margin-right: 3px;
}

.letter {
  font-family: "Liberation Serif", serif;
  font-size: 15px;
  color: #333;
}

.toolbar .letter {
  width: 23px;
  margin-right: 1px;
}

.letter.b {
  font-weight: bold;
}

.letter.i {
  font-weight: bold;
  font-style: italic;
}

.letter.u {
  text-decoration: underline;
}

/* work area */
.main {
  flex: 1;
  display: flex;
  min-height: 0;
}

.objects {
  width: 28px;
  display: flex;
  flex-direction: column;
  align-items: center;
  gap: 2px;
  padding-top: 1px;
  background: linear-gradient(90deg, #e6f1ff, #bcd5f8);
  border-bottom: 1px solid #5d83bb;
}

.objects .fly {
  position: relative;
  margin-bottom: 7px;
}

.objects .fly::after {
  content: "";
  position: absolute;
  top: 24px;
  left: 12px;
  border: 3px solid transparent;
  border-left-color: #17396f;
  border-right: 0;
}

.objects .text-tool {
  font-family: "Liberation Serif", serif;
  font-size: 17px;
  font-weight: bold;
  color: #c4504c;
}

.work {
  flex: 1;
  display: flex;
  flex-direction: column;
  min-width: 0;
}

.work-top {
  flex: 1;
  display: flex;
  gap: 3px;
  min-height: 0;
}

.designer {
  flex: 1;
  display: flex;
  flex-direction: column;
  min-width: 0;
  border-left: 1px solid #8fb0df;
}

.design-area {
  flex: 1;
  display: flex;
  min-height: 0;
  background: #b5d3ff;
}

.bands {
  width: 94px;
  color: #000;
}

.bands-head {
  height: 23px;
  padding: 3px 6px;
}

.band-item {
  display: flex;
  align-items: center;
  height: 23px;
  padding: 0 0 4px 4px;
  border-bottom: 1px solid #8c9bb0;
  border-right: 1px solid #8c9bb0;
  background: linear-gradient(#bcd8ff, #d9e9ff);
}

.band-item.tall {
  height: 41px;
}

.band-item.hot {
  background: linear-gradient(#ffc27a, #ff9d2e 50%, #ffc069);
}

.band-item.hot.sub {
  background: linear-gradient(#ffb45c, #ffc781);
}

.vruler {
  width: 28px;
  padding: 7px 4px 0 9px;
  display: flex;
  flex-direction: column;
  gap: 3px;
}

.split {
  width: 14px;
  height: 10px;
  margin-bottom: 3px;
}

.vruler i {
  height: 20px;
  background: linear-gradient(#000, #000) center bottom / 4px 1px no-repeat #fff;
}

.vruler .tall {
  height: 39px;
  background-position: center;
}

.vruler .thin {
  height: 1px;
  background: #fff;
}

.canvas {
  flex: 1;
  display: flex;
  flex-direction: column;
  min-width: 0;
  padding-top: 4px;
}

.ruler {
  display: flex;
  align-items: center;
  height: 14px;
  margin-bottom: 5px;
  padding: 0 3px 0 11px;
  background: #fff;
}

.ruler b,
.ruler i {
  flex: 1 1 0;
  min-width: 0;
  text-align: center;
  font: 9px/14px "DejaVu Sans", sans-serif;
  color: #000;
}

.ruler i {
  height: 4px;
  background: linear-gradient(#000, #000) center / 1px 4px no-repeat;
}

.paper {
  position: relative;
  z-index: 1;
  color: #000;
  box-shadow: 1px 2px 2px #4a6a98;
}

.band {
  height: 23px;
  padding-left: 28px;
  border-bottom: 3px solid #d2d2d2;
  background: radial-gradient(circle at 0 0, #aaa 1px, transparent 1px) 1px 0 / 9px 9px #fff;
}

.band.last {
  height: 26px;
  border-bottom-width: 7px;
}

.title-band {
  height: 42px;
  padding: 10px 0 0 279px;
}

/* corner marks of the text object */
.title-band h2 {
  width: 160px;
  height: 23px;
  padding-left: 5px;
  font-size: 22px;
  font-weight: 500;
  line-height: 22px;
  background:
    linear-gradient(#000, #000) 0 0 / 4px 1px,
    linear-gradient(#000, #000) 0 0 / 1px 4px,
    linear-gradient(#000, #000) 100% 0 / 4px 1px,
    linear-gradient(#000, #000) 100% 0 / 1px 4px,
    linear-gradient(#000, #000) 0 100% / 4px 1px,
    linear-gradient(#000, #000) 0 100% / 1px 4px,
    linear-gradient(#000, #000) 100% 100% / 4px 1px,
    linear-gradient(#000, #000) 100% 100% / 1px 4px;
  background-repeat: no-repeat;
}

.band table {
  width: 474px;
  table-layout: fixed;
  border-collapse: collapse;
}

.band td {
  position: relative;
  height: 19px;
  padding: 0 3px;
  border: 1px solid #000;
  line-height: 12px;
  vertical-align: top;
  white-space: nowrap;
}

.band td div {
  height: 18px;
  overflow: hidden;
}

.selected i {
  position: absolute;
  width: 5px;
  height: 5px;
  border: 1px solid #000;
  background: #fff;
}

.selected .tl, .selected .tc, .selected .tr { top: -3px; }
.selected .ml, .selected .mr { top: 6px; }
.selected .bl, .selected .bc, .selected .br { bottom: -3px; }
.selected .tl, .selected .ml, .selected .bl { left: -3px; }
.selected .tc, .selected .bc { left: 45px; }
.selected .tr, .selected .mr, .selected .br { right: -3px; }

.desk {
  flex: 1;
  position: relative;
  background:
    linear-gradient(148deg, rgba(255, 255, 255, .12) 40px, transparent 41px),
    linear-gradient(#8eaedb, #5b82b5);
}

.note {
  position: absolute;
  z-index: 2;
  top: -6px;
  left: 52px;
}

.note svg {
  display: block;
  width: 20px;
  height: 60px;
}

.note p {
  padding: 1px 0 0 13px;
  font-size: 21px;
  line-height: 24px;
  color: #d3202b;
  white-space: nowrap;
}

.note span {
  font-family: "Open Sans", sans-serif;
  font-size: 20px;
}

.hscroll {
  display: flex;
  align-items: center;
  height: 16px;
  background: #91a9cc;
  border-top: 1px solid #6c88b2;
}

.hscroll button {
  width: 18px;
  display: flex;
  justify-content: center;
}

.hscroll button::before {
  content: "";
  border: 5px solid transparent;
}

.hscroll .left::before {
  border-right-color: #46618f;
  border-left: 0;
}

.hscroll .right::before {
  border-left-color: #46618f;
  border-right: 0;
}

.hscroll .right {
  margin-left: auto;
}

.hscroll .thumb {
  width: 67%;
  height: 14px;
  border: 1px solid #5c76a0;
  background:
    repeating-linear-gradient(90deg, #8190a8 0 1px, transparent 1px 2px) center / 8px 8px no-repeat,
    linear-gradient(#e6ebf3 50%, #c3cddd 50%, #d3dbe7);
}

/* tabs */
.tabs {
  display: flex;
  gap: 2px;
  height: 26px;
  padding: 0 5px 4px;
  background: linear-gradient(#dceafc, #b5d2f9);
  border-top: 1px solid #8fb0df;
}

.tab {
  display: flex;
  align-items: center;
  gap: 3px;
  padding: 0 4px 0 2px;
  border: 1px solid #86a8d8;
  border-top: 0;
  border-radius: 0 0 5px 5px;
  background: linear-gradient(#c9dff9, #e2eefc);
  color: #17396f;
}

.tab.active {
  background: #fff;
}

/* data panel */
.data {
  width: 206px;
  display: flex;
  flex-direction: column;
}

.data-head {
  display: flex;
  align-items: center;
  gap: 8px;
  height: 20px;
  padding: 0 4px 0 5px;
  background: linear-gradient(#dcebff, #b4d2fb);
}

.data-head h3 {
  flex: 1;
  font-size: 12px;
}

.data-head svg {
  display: block;
  width: 10px;
  height: 10px;
}

.data-tools {
  display: flex;
  align-items: center;
  height: 24px;
  padding: 0 0 2px 5px;
  background: linear-gradient(#e2eefd, #bdd6f8);
  border-bottom: 1px solid #6f9dd9;
}

.data-tools button {
  display: flex;
  align-items: center;
  justify-content: center;
  width: 25px;
}

.data-tools .drop {
  margin: 0 0 0 6px;
}

.tree {
  flex: 1;
  min-height: 0;
  overflow: hidden;
  list-style: none;
  color: #000;
  background: repeating-linear-gradient(#888 0 1px, transparent 1px 2px) 11px 8px / 1px 256px no-repeat #fff;
}

.tree ul {
  list-style: none;
  color: #000;
  background: repeating-linear-gradient(#888 0 1px, transparent 1px 2px) 30px 0 / 1px 184px no-repeat;
}

.node {
  display: flex;
  align-items: center;
  height: 16px;
  padding-left: 7px;
  background: repeating-linear-gradient(90deg, #888 0 1px, transparent 1px 2px) 12px 8px / 10px 1px no-repeat;
}

.node .icon {
  margin: 0 4px 0 6px;
}

.node .box,
.node .none {
  width: 9px;
  height: 9px;
}

.node .box {
  border: 1px solid #8a93a3;
  background: linear-gradient(#222, #222) center / 5px 1px no-repeat #fff;
}

.node .plus {
  background:
    linear-gradient(#222, #222) center / 5px 1px no-repeat,
    linear-gradient(#222, #222) center / 1px 5px no-repeat #fff;
}

.tree ul li {
  display: flex;
  align-items: center;
  gap: 6px;
  height: 16px;
  padding-left: 42px;
  background: repeating-linear-gradient(90deg, #888 0 1px, transparent 1px 2px) 32px 8px / 10px 1px no-repeat;
}

.tree ul svg {
  width: 13px;
  height: 13px;
}

.desc {
  display: flex;
  justify-content: space-between;
  height: 30px;
  margin-top: 3px;
  padding-left: 4px;
  background: #fff;
}

.desc strong {
  padding-top: 4px;
}

.spin {
  display: flex;
  flex-direction: column;
  align-items: center;
  justify-content: space-between;
  width: 16px;
  padding: 5px 0;
  background: #f0f0f0;
}

.spin svg {
  width: 8px;
  height: 5px;
}

.data .tabs {
  height: 24px;
  padding: 0 6px 2px;
}

.messages {
  height: 25px;
  padding: 1px 2px 0;
  background: linear-gradient(#e0edff, #b3d1fb);
  border-bottom: 1px solid #5d83bb;
}

.messages button {
  display: flex;
  align-items: center;
  gap: 3px;
  height: 23px;
  padding: 0 4px 0 2px;
  border: 1px solid #86a8d8;
  border-bottom: 0;
  border-radius: 3px 3px 0 0;
  background: linear-gradient(#e8f2ff, #bfd9fc);
}

/* status bar */
.status {
  display: flex;
  align-items: center;
  height: 25px;
  padding-left: 3px;
  background: linear-gradient(#dbe8fa, #bbd2f3 40%, #c9ddf7);
}

.status .cell {
  display: flex;
  align-items: center;
  gap: 4px;
}

.status .pos {
  width: 159px;
}

.status .size {
  width: 160px;
}

.zoom {
  display: flex;
  align-items: center;
  width: 248px;
  height: 100%;
  margin-left: auto;
  padding-left: 5px;
  border-left: 1px solid #6f93c8;
  background: linear-gradient(#b0cbf0, #8cb0e3 50%, #a6c6f0);
}

.views {
  display: flex;
}

.views button {
  display: flex;
  align-items: center;
  justify-content: center;
  width: 22px;
  height: 18px;
  border: 1px solid #a5c1e8;
  background: #c8dcf6;
}

.zoom label {
  width: 25px;
  margin: 0 10px 0 5px;
}

.round svg {
  display: block;
  width: 16px;
  height: 16px;
}

.zoom input {
  appearance: none;
  flex: 1;
  min-width: 0;
  height: 16px;
  margin: 0;
  background: linear-gradient(#5a79a8, #5a79a8) center / 100% 1px no-repeat;
}

.zoom input::-webkit-slider-thumb {
  appearance: none;
  width: 9px;
  height: 13px;
  border: 1px solid #4d6d9c;
  border-radius: 0 0 5px 5px;
  background: linear-gradient(90deg, #fff 3px, #5a79a8 3px 4px, #dbe8f9 4px);
}

.grip {
  align-self: flex-end;
  width: 12px;
  height: 12px;
  margin-left: 8px;
  background: radial-gradient(circle at 1px 1px, #fff 1px, transparent 1px) 0 0 / 4px 4px;
  clip-path: polygon(100% 0, 100% 100%, 0 100%);
}

/* site mark in the lower right corner */
.watermark {
  position: fixed;
  right: 50px;
  bottom: 22px;
  width: 158px;
  color: #fff;
  opacity: .75;
  pointer-events: none;
}

.wm-top {
  display: flex;
  align-items: flex-end;
  font: bold 36px/36px "Liberation Sans", sans-serif;
  text-shadow: 0 0 1px #7d9cca;
}

.wm-top svg {
  width: 46px;
  height: 54px;
}

.wm-top .cn {
  font-family: "Noto Sans CJK SC", sans-serif;
  font-size: 26px;
}

.watermark p {
  font: 18px/20px "Open Sans", sans-serif;
  text-shadow: 0 0 1px #7d9cca;
}
```
